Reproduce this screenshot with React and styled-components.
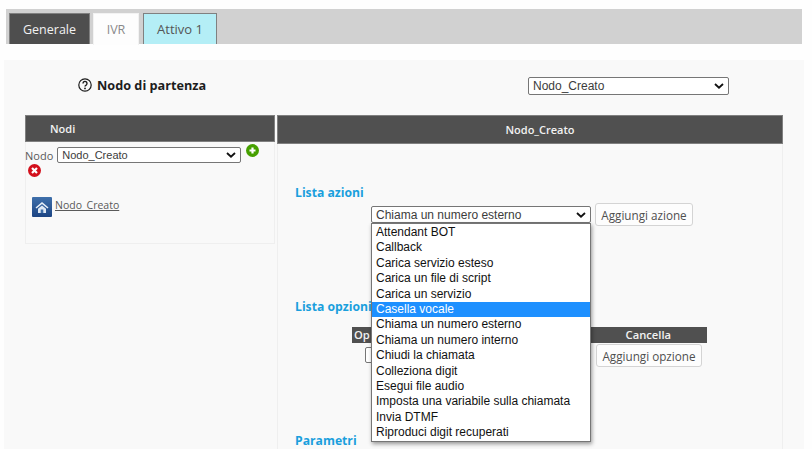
import React from "react";
import styled, { createGlobalStyle } from "styled-components";

const Global = createGlobalStyle`
  html, body { margin: 0; padding: 0; background: #fefefe; overflow: hidden; }
  #root { width: 812px; height: 449px; }
  * { box-sizing: border-box; }
`;

const chevron = `url("data:image/svg+xml,%3Csvg xmlns='http://www.w3.org/2000/svg' width='10' height='6' viewBox='0 0 10 6'%3E%3Cpath d='M1 1l4 3.6L9 1' fill='none' stroke='%23111' stroke-width='1.9'/%3E%3C/svg%3E")`;

const Page = styled.div`
  width: 812px;
  height: 449px;
  overflow: hidden;
  padding: 9px 10px 0 6px;
  font-family: "Open Sans", "Noto Sans", sans-serif;
  color: #4f4f4f;
`;

const TabBar = styled.div`
  display: flex;
  height: 35px;
  padding: 4px 0 0 3px;
  gap: 3px;
  background: #d1d1d1;
`;

const Tab = styled.div`
  display: flex;
  align-items: center;
  justify-content: center;
  width: ${(p) => p.$w}px;
  height: ${(p) => (p.$white ? 32 : 31)}px;
  margin-right: ${(p) => p.$gap || 0}px;
  font-size: ${(p) => p.$fs || 12.5}px;
  background: ${(p) => p.$bg};
  color: ${(p) => p.$fg};
  border: ${(p) => p.$border};
  border-bottom: 0;
`;

const Panel = styled.div`
  margin: 16px -2px 0 -2px;
  height: 400px;
  background: #f9f9f9;
  padding: 0 0 0 21px;
`;

const StartRow = styled.div`
  display: flex;
  align-items: center;
  height: 55px;
  padding: 0 0 3px 53px;
`;

const StartLabel = styled.div`
  display: flex;
  align-items: center;
  gap: 5px;
  width: 450px;
  height: 18px;
  margin-top: -2px;
  font-size: 12.7px;
  font-weight: 700;
  color: #1d1d1d;
`;

const Select = styled.select`
  appearance: none;
  display: block;
  width: ${(p) => p.$w}px;
  height: ${(p) => p.$h || 18}px;
  padding: 0 14px 0 4px;
  font-family: "Liberation Sans", Arial, sans-serif;
  font-size: ${(p) => p.$fs || 12}px;
  color: #3c3c3c;
  background: #fff ${chevron} no-repeat right 4px center;
  border: 1px solid #767676;
  border-radius: 2px;
`;

const Columns = styled.div`
  display: grid;
  grid-template-columns: 250px 506px;
  gap: 2px;
`;

const Col = styled.div`
  border: 1px solid #efefef;
  border-top: 0;
  height: ${(p) => p.$h}px;
`;

const ColHead = styled.div`
  display: flex;
  align-items: center;
  justify-content: ${(p) => (p.$center ? "center" : "flex-start")};
  height: ${(p) => p.$h}px;
  margin: 0 -1px;
  padding-left: ${(p) => (p.$center ? 20 : 24)}px;
  background: #505050;
  border: 1px solid #808080;
  font-size: 11px;
  font-weight: 600;
  color: #f2f2f2;
`;

const NodeForm = styled.div`
  display: flex;
  flex-wrap: wrap;
  align-items: flex-start;
  padding: 3px 0 0 0;
  font-size: 11px;
  color: #5a5a5a;
`;

const NodeLabel = styled.span`
  line-height: 18px;
  margin-top: 2px;
  margin-right: 3px;
  margin-left: -1px;
`;

const SelectWrap = styled.div`
  margin-top: 2px;
  margin-left: 1px;
  margin-right: 5px;
`;

const CircleIcon = styled.svg`
  display: block;
  width: 13px;
  height: 13px;
  margin: ${(p) => p.$m};
`;

const Break = styled.div`
  flex-basis: 100%;
  height: 0;
`;

const NodeLink = styled.div`
  display: flex;
  align-items: center;
  gap: 3px;
  margin: 20px 0 0 6px;
`;

const LinkText = styled.a`
  font-size: 10.5px;
  color: #5a5a5a;
  text-decoration: underline;
  margin-top: -4px;
`;

const Body = styled.div`
  position: relative;
  padding: 40px 0 0 17px;
`;

const SectionTitle = styled.h3`
  margin: 0;
  font-size: 12.2px;
  line-height: 17px;
  font-weight: 700;
  color: #1a9fdd;
`;

const ActionRow = styled.div`
  display: flex;
  align-items: flex-start;
  gap: 4px;
  margin: 5px 0 0 76px;
  height: 92px;
`;

const Button = styled.button`
  width: ${(p) => p.$w}px;
  height: 23px;
  padding: 0;
  margin-top: ${(p) => p.$mt || 0}px;
  background: #fdfdfd;
  border: 1px solid #d4d4d4;
  border-radius: 3px;
  font-family: "Open Sans", "Noto Sans", sans-serif;
  font-size: 11.7px;
  color: #4f4f4f;
`;

const OptionTable = styled.div`
  margin: 12px 0 0 57px;
  width: 355px;
`;

const TableHead = styled.div`
  display: flex;
  justify-content: space-between;
  height: 16px;
  padding: 0 36px 0 2px;
  background: #505050;
  color: #f2f2f2;
  font-size: 11.2px;
  line-height: 16px;
  font-weight: 600;
`;

const TableRow = styled.div`
  display: flex;
  justify-content: flex-end;
  align-items: flex-start;
  padding: 1px 5px 0 13px;
  height: 89px;
`;

const Stub = styled.div`
  width: 30px;
  height: 16px;
  margin: 3px auto 0 0;
  border: 1px solid #767676;
  border-radius: 2px;
  background: #fff;
`;

const Menu = styled.ul`
  position: absolute;
  left: 93px;
  top: 79px;
  width: 220px;
  margin: 0;
  padding: 1px 0;
  list-style: none;
  background: #fff;
  border: 1px solid #767676;
  box-shadow: 1px 2px 4px rgba(0, 0, 0, 0.4);
  font-family: "Liberation Sans", Arial, sans-serif;
  font-size: 12px;
  color: #111;
`;

const MenuItem = styled.li`
  height: 15.4px;
  line-height: 15px;
  padding-left: 4px;
  white-space: nowrap;
  background: ${(p) => (p.$active ? "#1e90ff" : "transparent")};
  color: ${(p) => (p.$active ? "#fff" : "#111")};
`;

const options = [
  "Attendant BOT",
  "Callback",
  "Carica servizio esteso",
  "Carica un file di script",
  "Carica un servizio",
  "Casella vocale",
  "Chiama un numero esterno",
  "Chiama un numero interno",
  "Chiudi la chiamata",
  "Colleziona digit",
  "Esegui file audio",
  "Imposta una variabile sulla chiamata",
  "Invia DTMF",
  "Riproduci digit recuperati",
];

const HelpIcon = () => (
  <svg width="14" height="14" viewBox="0 0 14 14" fill="none" stroke="#1d1d1d">
    <circle cx="7" cy="7" r="6.2" strokeWidth="1.2" />
    <path d="M5 5.400a2 2 0 1 1 3.100 1.700c-.7.4-1.100.8-1.100 1.500" strokeWidth="1.400" />
    <circle cx="7" cy="10.400" r=".9" fill="#1d1d1d" stroke="none" />
  </svg>
);

const PlusIcon = () => (
  <CircleIcon viewBox="0 0 13 13" $m="-1px 0 0 0">
    <circle cx="6.500" cy="6.500" r="6.500" fill="#46a000" />
    <path d="M6.500 3.500v6M3.500 6.500h6" stroke="#fff" strokeWidth="2.200" />
  </CircleIcon>
);

const CrossIcon = () => (
  <CircleIcon viewBox="0 0 13 13" $m="-1px 0 0 2px">
    <circle cx="6.500" cy="6.500" r="6.500" fill="#d3101c" />
    <path d="M4 4l5 5M9 4l-5 5" stroke="#fff" strokeWidth="2.200" />
  </CircleIcon>
);

const HomeIcon = () => (
  <svg width="20" height="20" viewBox="0 0 20 20">
    <defs>
      <linearGradient id="homeBg" x1="0" y1="0" x2="0" y2="1">
        <stop offset="0" stopColor="#3f70ab" />
        <stop offset="1" stopColor="#1c4483" />
      </linearGradient>
    </defs>
    <rect width="20" height="20" rx="1" fill="url(#homeBg)" />
    <path d="M3.500 10.500L10 5l6.500 5.500-1 1L10 7.100l-5.500 4.400z" fill="#e8f0f8" />
    <path d="M6 11.800L10 8.500l4 3.300V16H6z" fill="#dfe9f4" />
    <rect x="8.700" y="12.500" width="2.600" height="3.500" fill="#3f6ea8" />
  </svg>
);

export default function App() {
  return (
    <Page>
      <Global />
      <TabBar>
        <Tab $w={81} $bg="#4e4e4e" $fg="#f2f2f2" $border="1px solid #808080">Generale</Tab>
        <Tab $w={46} $white $gap={1} $bg="#fdfdfd" $fg="#8a8a8a" $border="1px solid #f2f2f2">IVR</Tab>
        <Tab $w={74} $fs={13} $bg="#b4eef6" $fg="#555" $border="1px solid #808080">Attivo 1</Tab>
      </TabBar>
      <Panel>
        <StartRow>
          <StartLabel><HelpIcon />Nodo di partenza</StartLabel>
          <Select $w={201}><option>Nodo_Creato</option></Select>
        </StartRow>
        <Columns>
          <Col $h={129}>
            <ColHead $h={27}>Nodi</ColHead>
            <NodeForm>
              <NodeLabel>Nodo</NodeLabel>
              <SelectWrap><Select $w={184} $h={16} $fs={11}><option>Nodo_Creato</option></Select></SelectWrap>
              <PlusIcon />
              <Break />
              <CrossIcon />
              <Break />
              <NodeLink><HomeIcon /><LinkText>Nodo_Creato</LinkText></NodeLink>
            </NodeForm>
          </Col>
          <Col $h={360}>
            <ColHead $h={29} $center>Nodo_Creato</ColHead>
            <Body>
              <SectionTitle>Lista azioni</SectionTitle>
              <ActionRow>
                <Select $w={220} $h={17}><option>Chiama un numero esterno</option></Select>
                <Button $w={98} $mt={-3}>Aggiungi azione</Button>
              </ActionRow>
              <SectionTitle>Lista opzioni</SectionTitle>
              <OptionTable>
                <TableHead><span>Op</span><span>Cancella</span></TableHead>
                <TableRow>
                  <Stub />
                  <Button $w={106}>Aggiungi opzione</Button>
                </TableRow>
              </OptionTable>
              <SectionTitle>Parametri</SectionTitle>
              <Menu>
                {options.map((o) => (
                  <MenuItem key={o} $active={o === "Casella vocale"}>{o}</MenuItem>
                ))}
              </Menu>
            </Body>
          </Col>
        </Columns>
      </Panel>
    </Page>
  );
}
